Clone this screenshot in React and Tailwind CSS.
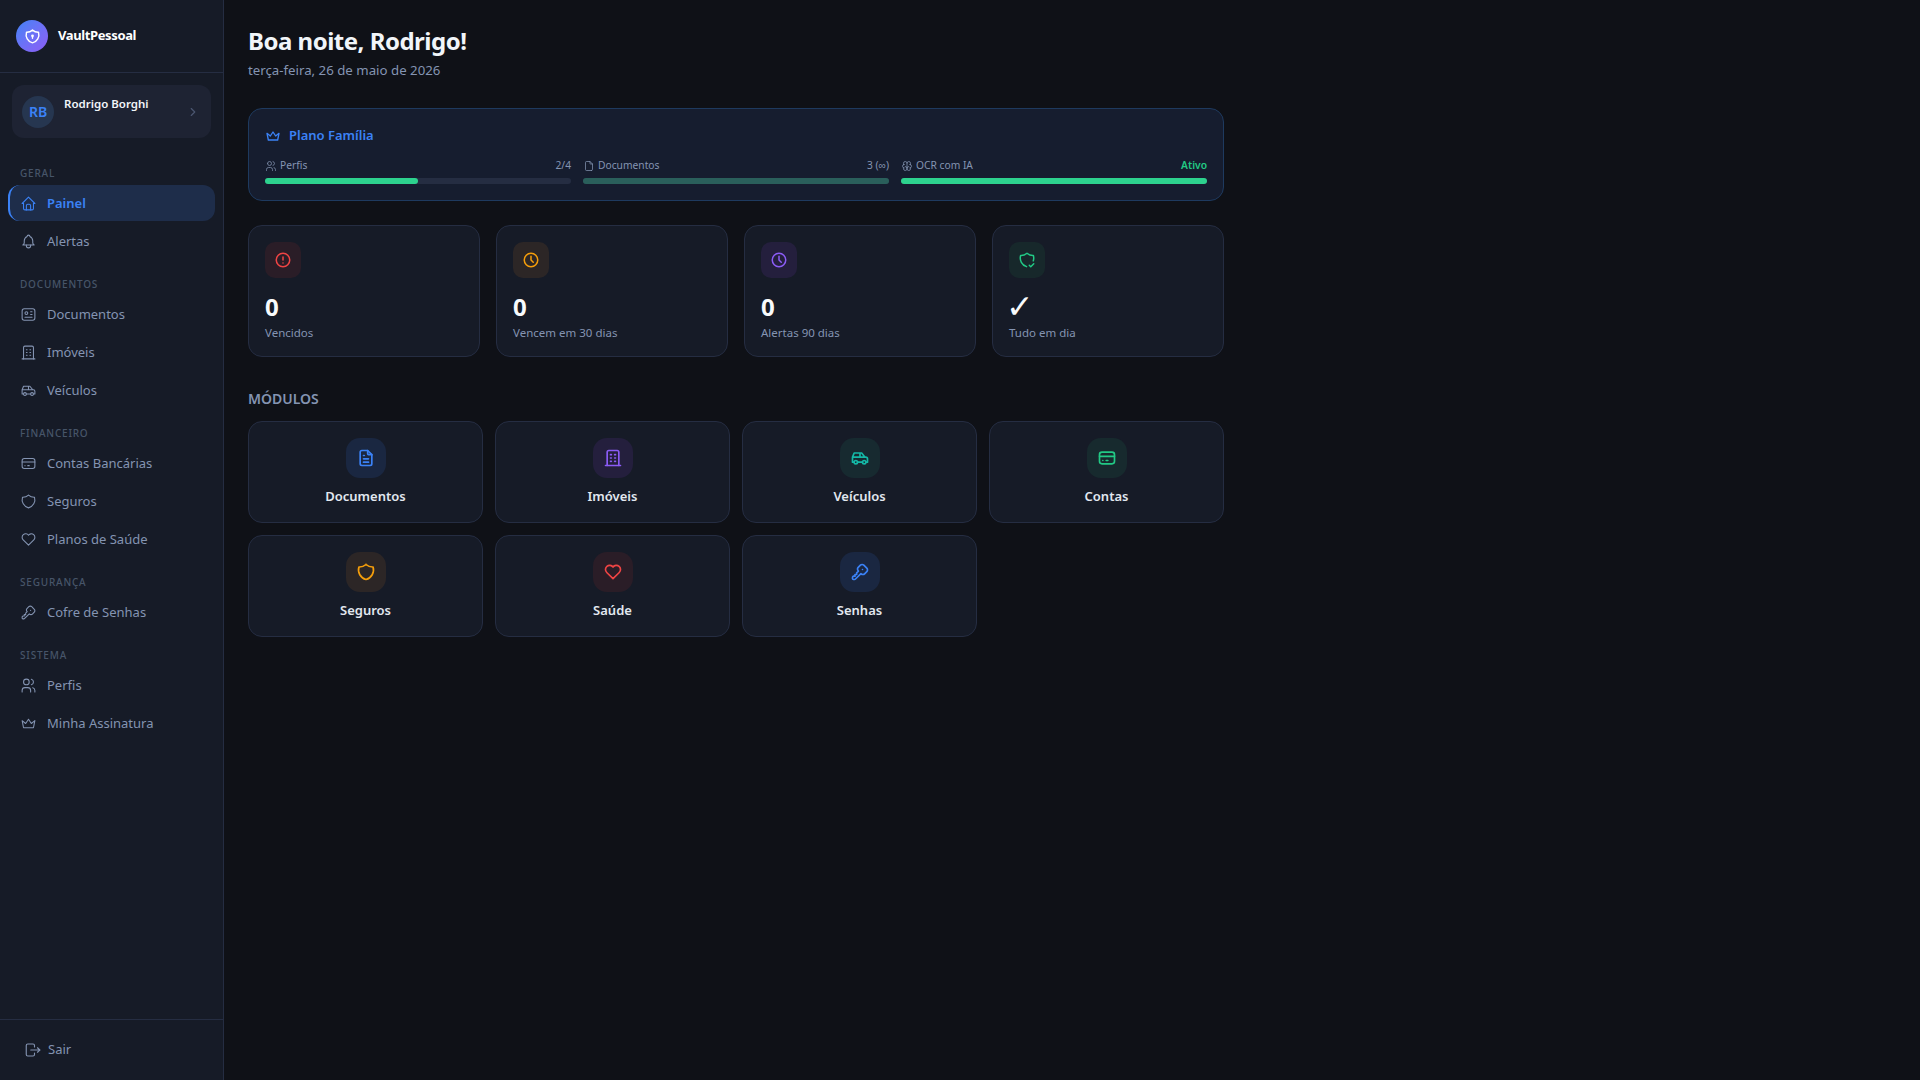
import React from "react";
import {
  TbAlertCircle,
  TbBell,
  TbBrain,
  TbBuilding,
  TbCar,
  TbChevronRight,
  TbClock,
  TbCreditCard,
  TbCrown,
  TbFile,
  TbFileText,
  TbHeart,
  TbHome,
  TbId,
  TbKey,
  TbLogout,
  TbShield,
  TbShieldCheck,
  TbShieldLock,
  TbUsers,
} from "react-icons/tb";

const navGroups = [
  { label: "Geral", items: [{ label: "Painel", icon: TbHome, active: true }, { label: "Alertas", icon: TbBell }] },
  {
    label: "Documentos",
    items: [
      { label: "Documentos", icon: TbId },
      { label: "Imóveis", icon: TbBuilding },
      { label: "Veículos", icon: TbCar },
    ],
  },
  {
    label: "Financeiro",
    items: [
      { label: "Contas Bancárias", icon: TbCreditCard },
      { label: "Seguros", icon: TbShield },
      { label: "Planos de Saúde", icon: TbHeart },
    ],
  },
  { label: "Segurança", items: [{ label: "Cofre de Senhas", icon: TbKey }] },
  {
    label: "Sistema",
    items: [
      { label: "Perfis", icon: TbUsers },
      { label: "Minha Assinatura", icon: TbCrown },
    ],
  },
];

const stats = [
  { value: "0", label: "Vencidos", icon: TbAlertCircle, box: "bg-[#2a1d27]", color: "text-[#ef4444]", size: "text-[24px] font-bold" },
  { value: "0", label: "Vencem em 30 dias", icon: TbClock, box: "bg-[#2c2626]", color: "text-[#f59e0b]", size: "text-[24px] font-bold" },
  { value: "0", label: "Alertas 90 dias", icon: TbClock, box: "bg-[#241f3d]", color: "text-[#8b5cf6]", size: "text-[24px] font-bold" },
  { value: "✓", label: "Tudo em dia", icon: TbShieldCheck, box: "bg-[#17282b]", color: "text-[#22c985]", size: "-ml-[3px] text-[33px] font-normal font-['DejaVu_Sans']" },
];

const modules = [
  { label: "Documentos", icon: TbFileText, box: "bg-[#1a2741]", color: "text-[#3b82f6]" },
  { label: "Imóveis", icon: TbBuilding, box: "bg-[#241f3d]", color: "text-[#8b5cf6]" },
  { label: "Veículos", icon: TbCar, box: "bg-[#172a30]", color: "text-[#14b8a6]" },
  { label: "Contas", icon: TbCreditCard, box: "bg-[#172a2e]", color: "text-[#22c985]" },
  { label: "Seguros", icon: TbShield, box: "bg-[#2c2626]", color: "text-[#f59e0b]" },
  { label: "Saúde", icon: TbHeart, box: "bg-[#2a1d27]", color: "text-[#ef4444]" },
  { label: "Senhas", icon: TbKey, box: "bg-[#1a2741]", color: "text-[#3b82f6]" },
];

const NavItem = ({ item }) => {
  const Icon = item.icon;
  return (
    <a
      className={
        item.active
          ? "flex h-9 items-center gap-[10px] rounded-xl border-l-2 border-[#3b82f6] bg-[#1e2d4a] pl-[10px] pt-[2px] text-[13px] font-semibold text-[#3b82f6]"
          : "flex h-9 items-center gap-[10px] rounded-xl pl-3 pt-[2px] text-[13px] text-[#8494b2]"
      }
    >
      <Icon className="-mt-[2px] shrink-0" size={17} strokeWidth={1.5} />
      {item.label}
    </a>
  );
};

const Sidebar = () => (
  <aside className="flex h-screen w-[224px] shrink-0 flex-col border-r border-[#252d42] bg-[#161b27]">
    <div className="flex h-[73px] items-center gap-[10px] border-b border-[#252d42] px-4">
      <div className="flex h-8 w-8 items-center justify-center rounded-full bg-gradient-to-br from-[#3b82f6] to-[#8b5cf6] text-white">
        <TbShieldLock size={17} />
      </div>
      <span className="text-[13px] font-bold tracking-[-0.38px] text-white">VaultPessoal</span>
    </div>

    <div className="mx-3 mt-3 flex h-[53px] items-center gap-[10px] rounded-xl bg-[#1e2333] pl-[10px] pr-[11px]">
      <div className="flex h-8 w-8 shrink-0 items-center justify-center rounded-full bg-[#263650] text-[14px] font-semibold text-[#3b82f6]">
        RB
      </div>
      <div className="flex-1 self-start pt-[10px] text-[11.5px] font-semibold leading-[18px] text-[#f1f5f9]">
        Rodrigo Borghi
      </div>
      <TbChevronRight className="text-[#4b5670]" size={14} />
    </div>

    <nav className="flex flex-col gap-[17px] px-2 pt-[27px]">
      {navGroups.map((group) => (
        <div key={group.label}>
          <div className="mb-1 h-4 pl-3 text-[10px] font-medium uppercase leading-4 tracking-[0.08em] text-[#475569]">
            {group.label}
          </div>
          <div className="flex flex-col gap-[2px]">
            {group.items.map((item) => (
              <NavItem key={item.label} item={item} />
            ))}
          </div>
        </div>
      ))}
    </nav>

    <div className="mt-auto flex h-[61px] items-center gap-[6px] border-t border-[#252d42] pl-[24px] text-[13px] text-[#8494b2]">
      <TbLogout size={18} strokeWidth={1.5} />
      Sair
    </div>
  </aside>
);

const PlanMeter = ({ icon: Icon, label, value, width, bar, valueClass }) => (
  <div className="flex-1">
    <div className="mb-[4px] flex h-4 items-center text-[10.25px] text-[#8494b2]">
      <Icon className="mr-[3px]" size={12} strokeWidth={1.5} />
      <span>{label}</span>
      <span className={`ml-auto ${valueClass}`}>{value}</span>
    </div>
    <div className="h-[6px] rounded-full bg-[#252d42]">
      <div className={`h-full rounded-full ${bar}`} style={{ width }} />
    </div>
  </div>
);

export default function App() {
  return (
    <div className="flex min-h-screen bg-[#0f1117] font-['Noto_Sans',sans-serif]">
      <Sidebar />
      <main className="flex-1 px-6 pt-[25px]">
        <div className="w-[976px]">
          <h1 className="text-[24px] font-bold leading-[32px] tracking-[-0.5px] text-[#f1f5f9]">Boa noite, Rodrigo!</h1>
          <p className="mt-[3px] text-[13.25px] leading-5 text-[#8494b2]">terça-feira, 26 de maio de 2026</p>

          <section className="mt-[28px] h-[93px] rounded-[14px] border border-[#1e3a5f] bg-[#161d2f] px-4 pt-[17px]">
            <div className="flex h-5 items-center gap-[8px] text-[13px] font-semibold text-[#3b82f6]">
              <TbCrown size={16} />
              Plano Família
            </div>
            <div className="mt-[12px] flex gap-3">
              <PlanMeter icon={TbUsers} label="Perfis" value="2/4" width="50%" bar="bg-[#2dd28e]" valueClass="" />
              <PlanMeter icon={TbFile} label="Documentos" value="3 (∞)" width="100%" bar="bg-[#2a5f5b]" valueClass="" />
              <PlanMeter
                icon={TbBrain}
                label="OCR com IA"
                value="Ativo"
                width="100%"
                bar="bg-[#2dd28e]"
                valueClass="font-semibold text-[#22c985]"
              />
            </div>
          </section>

          <section className="mt-6 grid grid-cols-4 gap-4">
            {stats.map((stat) => {
              const Icon = stat.icon;
              return (
                <div key={stat.label} className="h-[132px] rounded-[14px] border border-[#252d42] bg-[#161b27] p-4">
                  <div className={`flex h-9 w-9 items-center justify-center rounded-[10px] ${stat.box} ${stat.color}`}>
                    <Icon size={18} />
                  </div>
                  <div className={`mt-[13px] leading-8 text-[#f8fafc] ${stat.size}`}>{stat.value}</div>
                  <div className="mt-[2px] text-[11.5px] leading-4 text-[#8494b2]">{stat.label}</div>
                </div>
              );
            })}
          </section>

          <h2 className="mt-[32px] mb-3 text-[14px] font-semibold leading-5 text-[#8494b2]">MÓDULOS</h2>

          <section className="grid grid-cols-4 gap-3">
            {modules.map((mod) => {
              const Icon = mod.icon;
              return (
                <div
                  key={mod.label}
                  className="flex h-[102px] flex-col items-center rounded-[14px] border border-[#252d42] bg-[#161b27] pt-4"
                >
                  <div className={`flex h-10 w-10 items-center justify-center rounded-[14px] ${mod.box} ${mod.color}`}>
                    <Icon size={20} />
                  </div>
                  <div className="mt-[8px] text-[13px] font-semibold leading-5 text-[#e2e8f0]">{mod.label}</div>
                </div>
              );
            })}
          </section>
        </div>
      </main>
    </div>
  );
}
